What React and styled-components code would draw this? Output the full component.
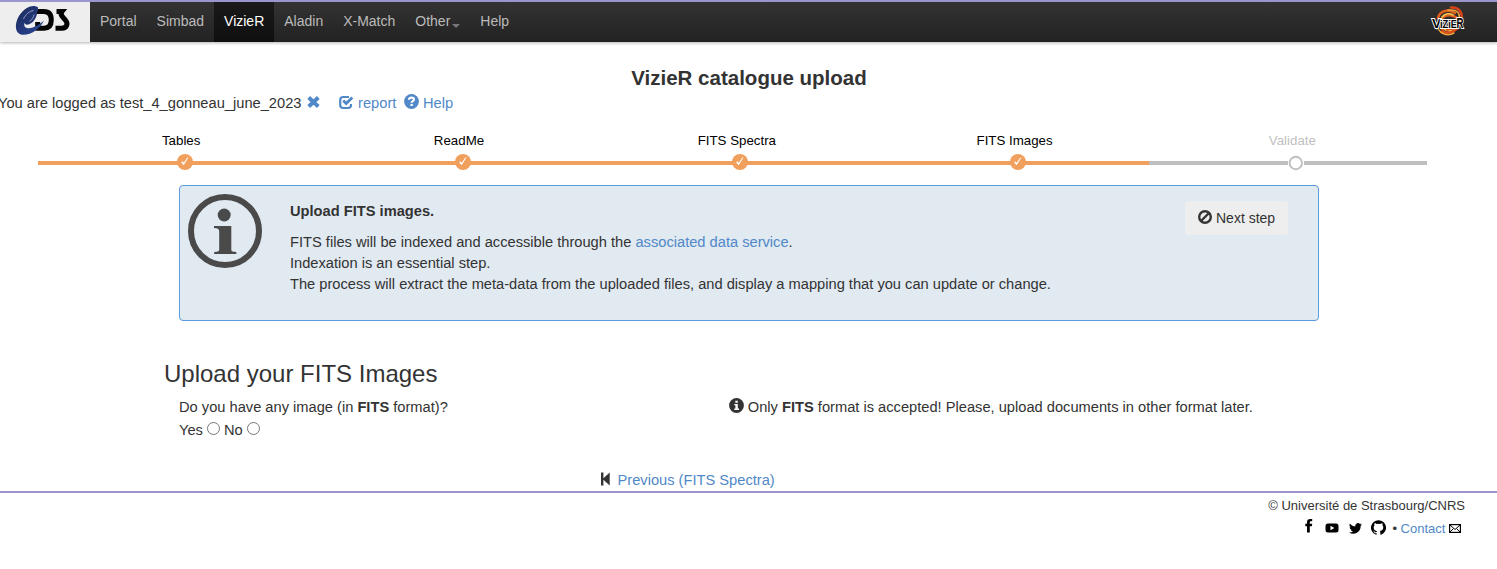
import React from "react";
import styled, { createGlobalStyle, css } from "styled-components";

const GlobalStyle = createGlobalStyle`
  * { box-sizing: border-box; }
  html, body { margin: 0; padding: 0; background: #fff; }
  body {
    font-family: "Liberation Sans", Arial, sans-serif;
    font-size: 11pt;
    line-height: 21px;
    color: #333;
    overflow: hidden;
  }
`;

const Page = styled.div`
  width: 100%;
  height: 569px;
  overflow: hidden;
`;

const NavBar = styled.nav`
  display: flex;
  height: 42px;
  border-top: 2px solid #9b95ce;
  background: linear-gradient(to bottom, #333, #222);
  box-shadow: 0 1px 3px rgba(0, 0, 0, 0.3);
`;

const Brand = styled.a`
  display: block;
  width: 90px;
  height: 40px;
  background: #eee;
  svg { display: block; }
`;

const NavItem = styled.a`
  display: flex;
  padding: 9px 10px 0;
  font-size: 14px;
  line-height: 20px;
  color: #bbb;
  ${(p) =>
    p.$active &&
    css`
      color: #fff;
      background: linear-gradient(to bottom, #1a1a1a, #0f0f0f);
    `}
`;

const Caret = styled.span`
  width: 0;
  height: 0;
  margin: 13px 0 0 2px;
  border: 4px solid transparent;
  border-top-color: #777;
  border-bottom: 0;
`;

const NavLogo = styled.div`
  margin-left: auto;
  margin-right: 30px;
  width: 36px;
  height: 40px;
  svg { display: block; overflow: visible; }
`;

const Title = styled.h1`
  margin: 24px 0 0;
  padding-left: 1px;
  font-size: 20.53px;
  line-height: 24px;
  text-align: center;
  font-weight: bold;
`;

const Session = styled.div`
  display: flex;
  height: 22px;
  margin: 2px 0 0 -2px;
  line-height: 22px;
  white-space: pre;
`;

const Link = styled.a`
  color: #5088c8;
`;

const IconSlot = styled.span`
  display: inline-block;
  flex: none;
  width: ${(p) => p.$w}px;
  height: 15px;
  margin: ${(p) => p.$m || "0"};
  color: ${(p) => p.$color || "#333"};
  vertical-align: top;
  svg { display: block; }
`;

const Steps = styled.ol`
  display: flex;
  margin: 16px 0 0 38px;
  padding: 0;
  width: 1389px;
  height: 55px;
  list-style: none;
`;

const Step = styled.li`
  flex: 1;
  display: flex;
  flex-direction: column;
  color: ${(p) => (p.$done ? "#000" : "#bfbfbf")};
`;

const StepLabel = styled.span`
  height: 24px;
  padding-left: 8.6px;
  font-size: 13.3px;
  line-height: 21px;
  text-align: center;
`;

const StepTrack = styled.div`
  height: 16px;
  padding-left: 50%;
  background: linear-gradient(${(p) => (p.$done ? "#f19f5c, #f19f5c" : "#bfbfbf, #bfbfbf")})
    0 7px / 100% 4px no-repeat;
  svg { display: block; }
`;

const InfoPanel = styled.section`
  display: flex;
  width: 1140px;
  height: 136px;
  margin-left: 179px;
  border: 1px solid #5a9be0;
  border-radius: 4px;
  background: #e1e9f1;
`;

const InfoIcon = styled.div`
  width: 110px;
  padding: 8px;
  svg { display: block; }
`;

const InfoText = styled.div`
  flex: 1;
  padding-top: 15px;
  p { margin: 0; }
  p + p { margin-top: 10px; }
`;

const NextButton = styled.button`
  display: flex;
  width: 103px;
  height: 34px;
  margin: 15px 30px 0 0;
  padding: 0 0 0 13px;
  border: 0;
  border-radius: 4px;
  background: #eee;
  color: #333;
  font: 14px/34px "Liberation Sans", Arial, sans-serif;
`;

const Heading = styled.h2`
  margin: 39px 0 0 164px;
  font-size: 24px;
  line-height: 28px;
  font-weight: normal;
`;

const Question = styled.div`
  display: flex;
  margin-top: 9px;
  padding-left: 179px;
  height: 73px;
`;

const QuestionColumn = styled.div`
  width: ${(p) => p.$w}px;
  white-space: nowrap;
`;

const Choices = styled.div`
  display: flex;
  margin-top: 2px;
  label { white-space: pre; }
  input { width: 13px; height: 13px; margin: 2px 4px 0 0; }
`;

const Previous = styled.div`
  display: flex;
  height: 21px;
  padding-left: 600px;
`;

const Footer = styled.footer`
  border-top: 2px solid #9b95ce;
  padding: 2px 32px 0 0;
  font-size: 13px;
  text-align: right;
`;

const FooterRow = styled.div`
  display: flex;
  justify-content: flex-end;
  height: 23px;
  white-space: pre;
  padding-right: ${(p) => p.$right || 0}px;
`;

const CdsLogo = () => (
  <svg width="90" height="40" viewBox="0 2 90 40">
    <defs>
      <linearGradient id="swirl" x1="0" y1="0" x2="1" y2="1">
        <stop offset="0" stopColor="#1b2a55" />
        <stop offset="0.55" stopColor="#24397f" />
        <stop offset="1" stopColor="#2f4c96" />
      </linearGradient>
    </defs>
    <g fill="none" stroke="#050505" strokeWidth="5">
      <path d="M37 11.500H44C49 11.500 51.300 14.500 51.300 20C51.300 25 49 28.200 44 28.200H37.700V22" />
      <path d="M56.500 11.500H62C60 14 61.500 16 63.500 18L65.500 20.200C68.500 24 66.500 28.200 62 28.200H55.500" />
    </g>
    <path
      d="M38 7.500C34 3.800 25 7 20 14.500C14 23 14.500 34 22.500 34.700C31 35.200 40 29 44 20.500C38 26 31 29 27 28C22.500 27 24 21 28 16C31.500 11.500 35 9.500 38 11.500Z"
      fill="url(#swirl)"
    />
    <path
      d="M36 8C39.500 14 34 23 28.500 24.500C23.500 25.500 22.500 20.500 26 16.500C30 12.500 32 12 34 10Z"
      fill="#203371"
    />
    <path d="M23.500 19C25.500 14.500 29.500 11 33.500 10.500M29.500 21.500C32 20 33.500 17 34 14.500" fill="none" stroke="#aab3cc" strokeWidth="0.800" />
  </svg>
);

const VizierLogo = () => (
  <svg width="36" height="40" viewBox="1431 2 36 40">
    <g fill="none" strokeLinecap="round">
      <path d="M1438 18C1440 10 1449 9 1455 13M1440 22C1442 15 1451 13 1457 18" stroke="#e2601c" strokeWidth="2.600" />
      <path d="M1451 7.500C1459 7 1463.500 13 1461 21C1459 30 1450 35 1441 32" stroke="#d9431a" strokeWidth="2.600" />
      <path d="M1448 10C1461 9 1460 17 1458 20M1437 25C1438 33 1447 37 1454 33" stroke="#eaa63c" strokeWidth="1.500" />
      <path d="M1442 17C1445 13 1450 13 1453 15M1442 28C1447 32 1453 31 1456 28" stroke="#f3c650" strokeWidth="1.600" />
      <path d="M1441 28C1444 34 1449 34 1454 30M1447 30L1453 28" stroke="#d8501c" strokeWidth="1.900" />
    </g>
    <g
      fontFamily="Liberation Sans"
      fontWeight="bold"
      fill="#000"
      stroke="#fff"
      strokeWidth="1.800"
      paintOrder="stroke"
    >
      <text x="1432" y="28" fontSize="13.500">V</text>
      <text x="1440" y="28" fontSize="10.500" textLength="17" lengthAdjust="spacingAndGlyphs">iZiE</text>
      <text x="1456.500" y="28" fontSize="14" textLength="7" lengthAdjust="spacingAndGlyphs">R</text>
    </g>
  </svg>
);

const RemoveIcon = () => (
  <svg width="13" height="13" viewBox="0 0 13 13">
    <path d="M1.700 1.500L11.300 10.500M11.300 1.500L1.700 10.500" stroke="currentColor" strokeWidth="3.900" />
  </svg>
);

const ReportIcon = () => (
  <svg width="15" height="15" viewBox="0 0 15 15" fill="none" stroke="currentColor">
    <path d="M10 2H4.200Q1.200 2 1.200 5V10Q1.200 13 4.200 13H9Q12 13 12 10V9" strokeWidth="2.200" />
    <path d="M4.200 5.500L7.200 8.500L13.300 2.500" strokeWidth="2.800" />
  </svg>
);

const HelpIcon = () => (
  <svg width="15" height="15" viewBox="0 0 15 15">
    <circle cx="7.500" cy="7.500" r="7.400" fill="currentColor" />
    <path d="M5 5.800C5 3 10 3 10 5.300C10 7.100 7.600 7 7.600 8.800" fill="none" stroke="#fff" strokeWidth="2.100" />
    <rect x="6.500" y="9.900" width="2.300" height="2.100" fill="#fff" />
  </svg>
);

const DoneMarker = () => (
  <svg width="16" height="16" viewBox="0 0 16 16">
    <circle cx="8" cy="8" r="8" fill="#f19f5c" />
    <path d="M4.600 8.300L6.500 10.800L10.800 3.700L6.900 9.300L5.500 7.800Z" fill="#fff" stroke="#fff" strokeWidth=".8" />
  </svg>
);

const OpenMarker = () => (
  <svg width="16" height="17" viewBox="0 0 16 17">
    <rect width="16" height="17" fill="#fff" />
    <circle cx="7.800" cy="9" r="6.200" fill="#fff" stroke="#bfbfbf" strokeWidth="1.900" />
  </svg>
);

const BigInfoIcon = () => (
  <svg width="74" height="74" viewBox="0 0 74 74" fill="#4a4a4a">
    <circle cx="37" cy="37" r="34" fill="none" stroke="#4a4a4a" strokeWidth="6" />
    <circle cx="36.200" cy="21" r="6.500" />
    <path d="M26 32H43.300V56C43.300 57.500 45 57.700 48.300 58V60H26.200V58C29.500 57.700 31.200 57.500 31.200 55.500V37C31.200 34.800 29.500 34.300 26 34Z" />
  </svg>
);

const BanIcon = () => (
  <svg width="14" height="14" viewBox="0 0 14 14" fill="none" stroke="#333" strokeWidth="2.400">
    <circle cx="7" cy="7" r="5.800" />
    <path d="M3 11L11 3" />
  </svg>
);

const SmallInfoIcon = () => (
  <svg width="15" height="15" viewBox="0 0 15 15">
    <circle cx="7.500" cy="7.500" r="7.400" fill="#333" />
    <path d="M6.300 2.700H8.800V4.700H6.300ZM5.300 6H8.800V10.500H10V12H5.300V10.500H6.400V7.300H5.300Z" fill="#fff" />
  </svg>
);

const BackIcon = () => (
  <svg width="11" height="14" viewBox="0 0 11 14" fill="#333">
    <path d="M1 .5H3.400V6.200L9.700 .5V13.500L3.400 7.800V13.500H1Z" />
  </svg>
);

const FacebookIcon = () => (
  <svg width="8" height="14" viewBox="0 0 8 14">
    <path d="M2 13.500V7.300H.3V4.800H2V3.300C2 1 3.200 0 5.200 0H7.200V2.300H5.800C5 2.300 4.800 2.700 4.800 3.400V4.800H7.200L6.900 7.300H4.800V13.500Z" />
  </svg>
);

const YoutubeIcon = () => (
  <svg width="14" height="10" viewBox="0 0 14 10">
    <rect x=".5" y=".5" width="13" height="9" rx="2.500" />
    <path d="M5.500 2.700V7.300L9.300 5Z" fill="#fff" />
  </svg>
);

const TwitterIcon = () => (
  <svg width="13" height="11" viewBox="0 0 24 20">
    <path d="M24 2.400a10 10 0 0 1-2.800.8A5 5 0 0 0 23.300.4a10 10 0 0 1-3.100 1.200 4.900 4.900 0 0 0-8.400 4.500A14 14 0 0 1 1.700 1a4.900 4.900 0 0 0 1.500 6.600A4.900 4.900 0 0 1 1 7a4.900 4.900 0 0 0 4 4.800 5 5 0 0 1-2.200.1 4.900 4.900 0 0 0 4.600 3.400A9.900 9.900 0 0 1 0 17.500 14 14 0 0 0 21.500 5 10 10 0 0 0 24 2.400Z" />
  </svg>
);

const GithubIcon = () => (
  <svg width="15" height="15" viewBox="0 0 24 24">
    <path d="M12 .3a12 12 0 0 0-3.800 23.400c.6.100.8-.3.800-.6v-2c-3.300.7-4-1.600-4-1.600-.6-1.400-1.400-1.800-1.400-1.800-1-.7.100-.7.100-.7 1.200 0 1.900 1.200 1.900 1.200 1 1.800 2.800 1.300 3.500 1 0-.8.400-1.300.7-1.600-2.700-.3-5.500-1.300-5.500-6 0-1.200.5-2.300 1.300-3.100-.2-.4-.6-1.600 0-3.200 0 0 1-.3 3.400 1.200a11.500 11.500 0 0 1 6 0c2.300-1.500 3.300-1.200 3.300-1.200.6 1.600.2 2.800 0 3.200.9.800 1.300 1.900 1.300 3.200 0 4.600-2.800 5.600-5.500 5.900.5.400.9 1 .9 2.200v3.300c0 .3.100.7.800.6A12 12 0 0 0 12 .3" />
  </svg>
);

const MailIcon = () => (
  <svg width="12" height="9" viewBox="0 0 12 9" fill="none" stroke="#000">
    <rect x=".6" y=".6" width="10.800" height="7.800" strokeWidth="1.200" />
    <path d="M1 1L6 5.500L11 1M1 8L4.500 4.500M11 8L7.500 4.500" />
  </svg>
);

const steps = [
  { label: "Tables", done: true },
  { label: "ReadMe", done: true },
  { label: "FITS Spectra", done: true },
  { label: "FITS Images", done: true },
  { label: "Validate", done: false },
];

export default function App() {
  return (
    <Page>
      <GlobalStyle />
      <NavBar>
        <Brand><CdsLogo /></Brand>
        <NavItem>Portal</NavItem>
        <NavItem>Simbad</NavItem>
        <NavItem $active>VizieR</NavItem>
        <NavItem>Aladin</NavItem>
        <NavItem>X-Match</NavItem>
        <NavItem>Other<Caret /></NavItem>
        <NavItem>Help</NavItem>
        <NavLogo><VizierLogo /></NavLogo>
      </NavBar>

      <Title>VizieR catalogue upload</Title>
      <Session>
        <span>You are logged as test_4_gonneau_june_2023</span>
        <IconSlot $w={13} $m="4px 19px 0 5.6px" $color="#5088c8"><RemoveIcon /></IconSlot>
        <IconSlot $w={15} $m="3px 4px 0 0" $color="#5088c8"><ReportIcon /></IconSlot>
        <Link>report</Link>
        <IconSlot $w={15} $m="2px 4px 0 7.6px" $color="#5088c8"><HelpIcon /></IconSlot>
        <Link>Help</Link>
      </Session>

      <Steps>
        {steps.map((s) => (
          <Step key={s.label} $done={s.done}>
            <StepLabel>{s.label}</StepLabel>
            <StepTrack $done={s.done}>{s.done ? <DoneMarker /> : <OpenMarker />}</StepTrack>
          </Step>
        ))}
      </Steps>

      <InfoPanel>
        <InfoIcon><BigInfoIcon /></InfoIcon>
        <InfoText>
          <p><b>Upload FITS images.</b></p>
          <p>
            FITS files will be indexed and accessible through the <Link>associated data service</Link>.<br />
            Indexation is an essential step.<br />
            The process will extract the meta-data from the uploaded files, and display a mapping that you can update or change.
          </p>
        </InfoText>
        <NextButton>
          <IconSlot $w={14} $m="9px 4px 0 0"><BanIcon /></IconSlot>
          Next step
        </NextButton>
      </InfoPanel>

      <Heading>Upload your FITS Images</Heading>
      <Question>
        <QuestionColumn $w={550}>
          Do you have any image (in <b>FITS</b> format)?
          <Choices>
            <label>Yes </label><input type="radio" name="images" />
            <label>No </label><input type="radio" name="images" />
          </Choices>
        </QuestionColumn>
        <QuestionColumn $w={560}>
          <IconSlot $w={15} $m="1px 3.8px 0 0"><SmallInfoIcon /></IconSlot>
          Only <b>FITS</b> format is accepted! Please, upload documents in other format later.
        </QuestionColumn>
      </Question>
      <Previous>
        <IconSlot $w={11} $m="2px 6.5px 0 0"><BackIcon /></IconSlot>
        <Link>Previous (FITS Spectra)</Link>
      </Previous>

      <Footer>
        <FooterRow>© Université de Strasbourg/CNRS</FooterRow>
        <FooterRow $right={4}>
          <IconSlot $w={8} $m="1px 12px 0 0"><FacebookIcon /></IconSlot>
          <IconSlot $w={14} $m="5px 10px 0 0"><YoutubeIcon /></IconSlot>
          <IconSlot $w={13} $m="5px 9px 0 0"><TwitterIcon /></IconSlot>
          <IconSlot $w={15} $m="2px 6.5px 0 0"><GithubIcon /></IconSlot>
          <span>• <Link>Contact</Link> </span>
          <IconSlot $w={12} $m="6px 0 0 0"><MailIcon /></IconSlot>
        </FooterRow>
      </Footer>
    </Page>
  );
}
